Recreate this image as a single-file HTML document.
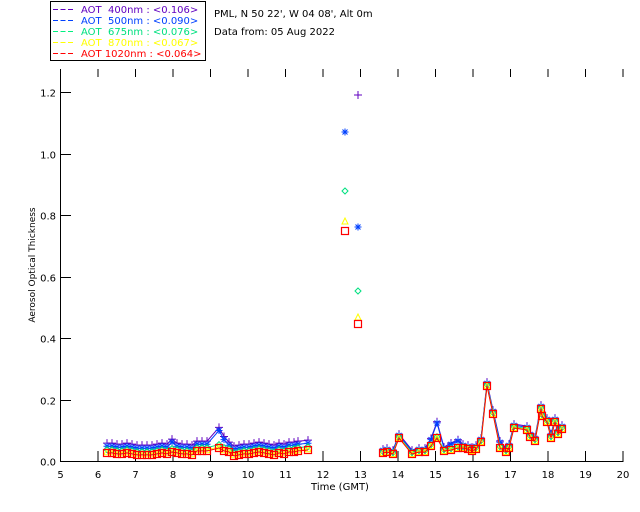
<!DOCTYPE html>
<html><head><meta charset="utf-8"><style>
html,body{margin:0;padding:0;background:#fff;width:640px;height:512px;overflow:hidden}
svg{display:block}
text{font-family:"DejaVu Sans","Liberation Sans",sans-serif;font-size:10px}
</style></head><body>
<svg id="s" width="640" height="512" xmlns="http://www.w3.org/2000/svg">
<rect x="50.5" y="1.5" width="155" height="59" fill="none" stroke="#000"/>
<g id="leg"></g>
<text x="81" y="13" fill="#6000c0" xml:space="preserve">AOT  400nm : &lt;0.106&gt;</text>
<text x="81" y="24" fill="#0040ff" xml:space="preserve">AOT  500nm : &lt;0.090&gt;</text>
<text x="81" y="35" fill="#00e080" xml:space="preserve">AOT  675nm : &lt;0.076&gt;</text>
<text x="81" y="46" fill="#ffff00" xml:space="preserve">AOT  870nm : &lt;0.067&gt;</text>
<text x="81" y="57" fill="#ff0000" xml:space="preserve">AOT 1020nm : &lt;0.064&gt;</text>
<text x="214" y="17" fill="#000">PML, N 50 22', W 04 08', Alt 0m</text>
<text x="214" y="35" fill="#000">Data from: 05 Aug 2022</text>
<g id="ax" stroke="#000" fill="none"></g>
<g id="dat"></g>
<text x="340" y="490" text-anchor="middle" fill="#000">Time (GMT)</text>
<text transform="translate(35,265) rotate(-90)" text-anchor="middle" fill="#000" style="font-size:9px">Aerosol Optical Thickness</text>
</svg>
<script>
var NS="http://www.w3.org/2000/svg",s=document.getElementById('s'),ax=document.getElementById('ax'),dat=document.getElementById('dat'),leg=document.getElementById('leg');
function X(h){return 60.5+(h-5)*37.5}function Y(v){return 461-v*307.5}
function el(p,t,a,tx){var e=document.createElementNS(NS,t);for(var k in a)e.setAttribute(k,a[k]);if(tx!=null)e.textContent=tx;p.appendChild(e);return e}
['#6000c0','#0040ff','#00f080','#ffff00','#ff0000'].forEach(function(c,i){for(var j=0;j<3;j++)el(leg,'rect',{x:53+j*7.5,y:9+i*11,width:5,height:1,fill:c});});
el(ax,'path',{d:'M60.5 69V461.5H623.5'});
for(var h=5;h<=20;h++){var x=X(h);el(ax,'path',{d:'M'+x+' 461V451M'+x+' 69V77'});el(s,'text',{x:x,y:478,'text-anchor':'middle',fill:'#000'},h);}
for(var i=0;i<=6;i++){var v=i*0.2,y=Math.round(Y(v))+.5;el(ax,'path',{d:'M60 '+y+'H71'});el(s,'text',{x:56,y:y+4,'text-anchor':'end',fill:'#000'},v.toFixed(1));}
var px=[[107,453],[112,453],[117,454],[122,454],[127,453],[132,454],[137,455],[142,455],[147,455],[152,455],[157,454],[162,453],[167,454],[172,452],[177,453],[182,454],[187,454],[192,455],[197,451],[202,451],[207,451],
[219,448],[224,451],[229,452],[234,456],[239,455],[244,454],[249,454],[254,453],[259,452],[264,453],[269,454],[274,455],[279,453],[284,454],[289,452],[294,452],[298,451],[308,450],
[383,453],[387,452],[393,454],[399,438],[412,454],[419,452],[425,452],[431,446],[437,438],[444,451],[451,450],[458,448],[463,448],[468,449],[472,451],[476,449],[481,442],[487,386],[493,414],[500,448],[506,452],[509,448],[514,428],[527,430],[530,437],[535,441],[541,409],[542,416],[547,422],[551,438],[555,422],[558,434],[562,429]];
var bump={};
[[219,0.035],[224,0.015],[431,0.012],[437,0.04],[451,0.01],[458,0.014],[500,0.01],[172,0.01],[487,0]].forEach(function(b){bump[b[0]]=b[1]});
var cols=['#ff0000','#ffff00','#00e080','#0040ff','#6000c0'],off=[0,0.004,0.011,0.022,0.032];
function mark(k,x,y,c){
 if(k==0)el(dat,'rect',{x:x-3.5,y:y-3.5,width:7,height:7,fill:'none',stroke:c,'stroke-width':1.2});
 else if(k==1)el(dat,'path',{d:'M'+(x-3)+' '+(y+3)+'L'+x+' '+(y-3)+'L'+(x+3)+' '+(y+3)+'Z',fill:'none',stroke:c});
 else if(k==2)el(dat,'path',{d:'M'+(x-3)+' '+y+'L'+x+' '+(y-3)+'L'+(x+3)+' '+y+'L'+x+' '+(y+3)+'Z',fill:'none',stroke:c});
 else if(k==3)el(dat,'path',{d:'M'+(x-3.5)+' '+y+'H'+(x+3.5)+'M'+x+' '+(y-3.5)+'V'+(y+3.5)+'M'+(x-2.5)+' '+(y-2.5)+'L'+(x+2.5)+' '+(y+2.5)+'M'+(x-2.5)+' '+(y+2.5)+'L'+(x+2.5)+' '+(y-2.5),stroke:c});
 else el(dat,'path',{d:'M'+(x-4)+' '+y+'H'+(x+4)+'M'+x+' '+(y-4)+'V'+(y+4),stroke:c});
}
for(var k=4;k>=0;k--){
 var pts=px.map(function(p){var b=bump[p[0]]||0;var sc=p[0]>370?0.4:1;return [p[0],p[1]-(off[k]*sc+(k>=3?b:0))*307.5]});
 var d='';for(var i=0;i<pts.length;i++){var gap=i==0||pts[i][0]-pts[i-1][0]>15;d+=(gap?'M':'L')+pts[i][0]+' '+pts[i][1].toFixed(1);}
 el(dat,'path',{d:d,fill:'none',stroke:cols[k]});
 pts.forEach(function(p){mark(k,p[0],p[1],cols[k])});
}
mark(4,358,95,'#6000c0');mark(3,345,132,'#0040ff');mark(2,345,191,'#00e080');mark(1,345,221,'#ffff00');mark(0,345,231,'#ff0000');
mark(3,358,227,'#0040ff');mark(2,358,291,'#00e080');mark(1,358,317,'#ffff00');mark(0,358,324,'#ff0000');
</script>
</body></html>
